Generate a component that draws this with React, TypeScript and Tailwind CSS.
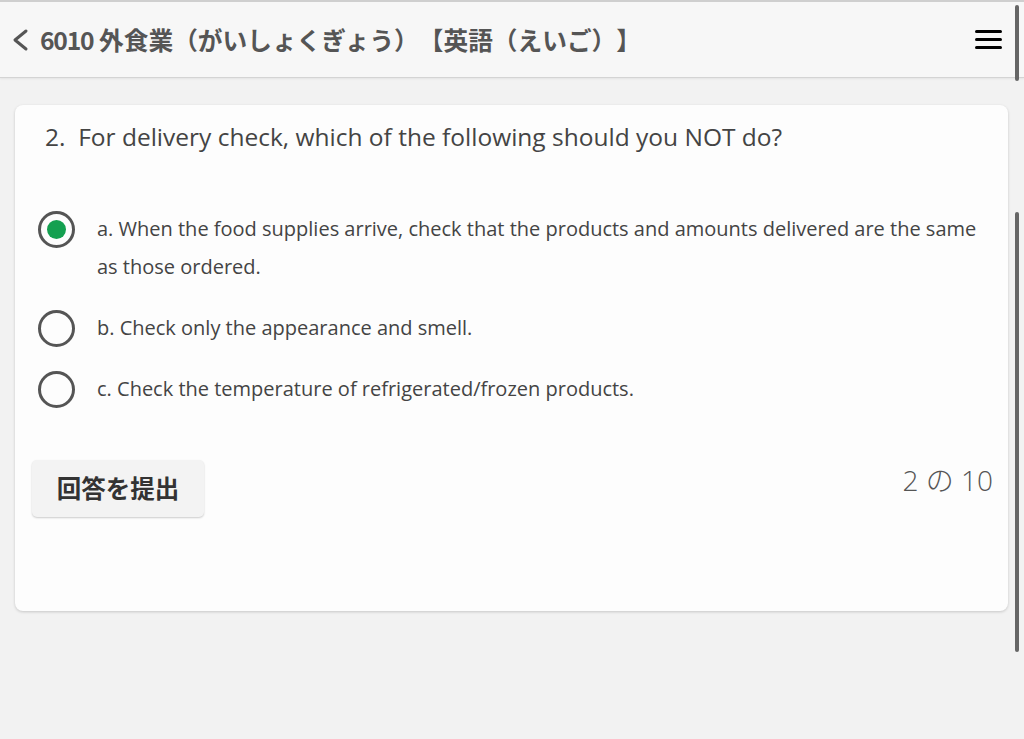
const options = [
  { key: 'a', text: 'a. When the food supplies arrive, check that the products and amounts delivered are the same as those ordered.' },
  { key: 'b', text: 'b. Check only the appearance and smell.' },
  { key: 'c', text: 'c. Check the temperature of refrigerated/frozen products.' },
]

function Radio({ checked }: { checked: boolean }) {
  return (
    <div className="w-[37px] h-[37px] shrink-0 rounded-full border-[3px] border-[#555] flex items-center justify-center">
      {checked && <div className="w-[19px] h-[19px] rounded-full bg-[#14a050]" />}
    </div>
  )
}

export default function App() {
  const selected = 'a'
  return (
    <div className="relative w-[1024px] h-[739px] overflow-hidden bg-[#f2f2f2] font-['Open_Sans','Noto_Sans_CJK_JP',sans-serif]">
      <header className="h-[78px] bg-[#f7f7f7] border-t-2 border-[#cfcfcf] border-b border-b-[#d4d4d4] shadow-[0_1px_2px_rgba(0,0,0,0.06)] flex items-center pl-[10px] pr-[22px]">
        <svg width="20" height="24" viewBox="0 0 20 24" fill="none" stroke="#555" strokeWidth="3" strokeLinecap="round" strokeLinejoin="round">
          <polyline points="16,3 5,12 16,21" />
        </svg>
        <h1 className="ml-[10px] text-[24.7px] font-bold text-[#555] [text-spacing-trim:space-all] font-['Noto_Sans_CJK_JP',sans-serif]">
          <span className="tracking-[-1.2px]">6010</span> 外食業（がいしょくぎょう）【英語（えいご）】
        </h1>
        <button className="ml-auto flex flex-col gap-[5px]">
          <span className="block w-[27px] h-[3px] bg-black rounded" />
          <span className="block w-[27px] h-[3px] bg-black rounded" />
          <span className="block w-[27px] h-[3px] bg-black rounded" />
        </button>
      </header>

      <main className="pt-[27px] pl-[15px] pr-[16px]">
        <section className="h-[506px] bg-[#fdfdfd] rounded-[8px] shadow-[0_1px_3px_rgba(0,0,0,0.18)] pt-[15px] pl-[17px] pr-[15px] flex flex-col">
          <h2 className="ml-[13px] text-[24.5px] leading-[34px] text-[#444]">
            2.&nbsp; For delivery check, which of the following should you NOT do?
          </h2>

          <div className="mt-[57px] flex flex-col gap-[24px] pr-[8px]">
            {options.map(o => (
              <label key={o.key} className="flex items-start pl-[6px]">
                <Radio checked={o.key === selected} />
                <p className="ml-[22px] text-[20px] leading-[38px] text-[#444] -mt-[1px]">{o.text}</p>
              </label>
            ))}
          </div>

          <div className="mt-[52px] flex items-start justify-between">
            <button className="w-[172px] h-[57px] bg-[#f3f3f3] rounded-[5px] shadow-[0_1px_2px_rgba(0,0,0,0.2)] text-[24.5px] font-bold text-[#333] font-['Noto_Sans_CJK_JP',sans-serif]">
              回答を提出
            </button>
            <span className="text-[28px] font-light text-[#555] leading-[40px]">2 の 10</span>
          </div>
        </section>
      </main>

      <div className="absolute left-[1015px] top-[5px] w-[4px] h-[76px] rounded bg-[#666]" />
      <div className="absolute left-[1015px] top-[212px] w-[4px] h-[440px] rounded bg-[#666]" />
    </div>
  )
}
